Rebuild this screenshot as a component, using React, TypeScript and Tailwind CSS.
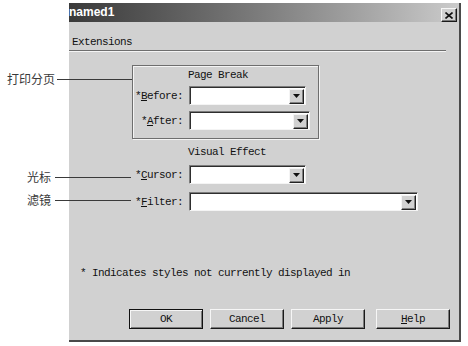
import React from "react";

const mono = { fontFamily: '"Liberation Mono", "DejaVu Sans Mono", monospace' };

// small black down arrow in the combo button
const ComboArrow = () => (
    <svg width="7" height="4" viewBox="0 0 7 4">
        <path d="M0 0h7L3.5 4z" fill="#111" />
    </svg>
);

interface ComboProps {
    width: string;
}

const Combo: React.FC<ComboProps> = ({ width }) => (
    <div
        className={`${width} h-[19px] bg-white flex justify-end items-center border-t border-l border-[#7c7c7c] border-r border-r-[#f4f4f4] border-b border-b-[#f4f4f4] shadow-[inset_1px_1px_0_#2e2e2e]`}
    >
        <div className="w-[15px] h-[15px] mr-[1px] mt-[1px] bg-[#d1d1d1] flex items-center justify-center border-t border-l border-[#f4f4f4] border-r border-r-[#222] border-b border-b-[#222] shadow-[inset_-1px_-1px_0_#808080]">
            <ComboArrow />
        </div>
    </div>
);

interface FieldProps {
    label: React.ReactNode;
    labelWidth: string;
    width: string;
    className?: string;
}

const Field: React.FC<FieldProps> = ({ label, labelWidth, width, className }) => (
    <div className={`flex items-center ${className ?? ""}`}>
        <div className={`${labelWidth} text-right text-[11px] tracking-[-0.6px] leading-[12px] pr-[6px] text-[#111]`}>{label}</div>
        <Combo width={width} />
    </div>
);

const DlgButton: React.FC<{ children: React.ReactNode; def?: boolean; className?: string }> = ({ children, def, className }) => (
    <div
        className={`w-[74px] h-[20px] bg-[#d1d1d1] flex items-center justify-center text-[11px] tracking-[-0.6px] leading-[12px] text-[#111] ${
            def
                ? "border border-[#111] shadow-[inset_1px_1px_0_#f6f6f6,inset_-1px_-1px_0_#7a7a7a]"
                : "border-t border-l border-[#f6f6f6] border-r border-r-[#1a1a1a] border-b border-b-[#1a1a1a] shadow-[inset_-1px_-1px_0_#7a7a7a]"
        } ${className ?? ""}`}
    >
        {children}
    </div>
);

const Callout: React.FC<{ text: string; top: string; left: string }> = ({ text, top, left }) => (
    <div
        className={`absolute ${top} ${left} text-[12px] leading-[14px] text-[#3a3a3a]`}
        style={{ fontFamily: '"Noto Sans CJK SC", "Noto Sans", sans-serif' }}
    >
        {text}
    </div>
);

export default function App() {
    return (
        <div className="relative w-[468px] h-[346px] bg-white overflow-hidden" style={mono}>
            {/* dialog */}
            <div className="ml-[69px] mt-[3px] w-[392px] h-[339px] bg-[#d1d1d1] border-r-2 border-b-2 border-[#4a4a4a] flex flex-col">
                {/* title bar */}
                <div className="h-[19px] flex items-start justify-between bg-gradient-to-r from-[#3a3a3a] via-[#7e7e7e] to-[#cbcbcb] pr-[2px]">
                    <span
                        className="text-white font-bold text-[12px] leading-[19px]"
                        style={{ fontFamily: '"Liberation Sans", Arial, sans-serif' }}
                    >
                        named1
                    </span>
                    <div className="w-[16px] h-[14px] mt-[5px] bg-[#d1d1d1] flex items-center justify-center border-t border-l border-[#f6f6f6] border-r border-r-[#1a1a1a] border-b border-b-[#1a1a1a] shadow-[inset_-1px_-1px_0_#7a7a7a]">
                        <svg width="8" height="7" viewBox="0 0 8 7">
                            <path d="M0.5 0.5L7.5 6.5M7.5 0.5L0.5 6.5" stroke="#111" strokeWidth="1.6" />
                        </svg>
                    </div>
                </div>

                {/* tab label */}
                <div className="mt-[14px] pl-[3px] text-[11px] tracking-[-0.6px] leading-[12px] text-[#111]">Extensions</div>
                <div className="mt-[2px] mr-[13px] h-[2px] border-t border-[#6e6e6e] border-b border-b-[#f4f4f4]" />

                {/* page break group */}
                <div className="mt-[13px] ml-[63px] w-[187px] h-[74px] border border-[#6e6e6e] shadow-[inset_1px_1px_0_#f4f4f4,1px_1px_0_#f4f4f4] flex flex-col">
                    <div className="mt-[3px] pl-[55px] text-[11px] tracking-[-0.6px] leading-[12px] text-[#111]">Page Break</div>
                    <Field
                        className="mt-[5px]"
                        labelWidth="w-[56px]"
                        width="w-[117px]"
                        label={<>*<span className="underline">B</span>efore:</>}
                    />
                    <Field
                        className="mt-[6px]"
                        labelWidth="w-[56px]"
                        width="w-[121px]"
                        label={<>*<span className="underline">A</span>fter:</>}
                    />
                </div>

                {/* visual effect */}
                <div className="mt-[7px] pl-[119px] text-[11px] tracking-[-0.6px] leading-[12px] text-[#111]">Visual Effect</div>
                <Field
                    className="mt-[7px] ml-[63px]"
                    labelWidth="w-[57px]"
                    width="w-[117px]"
                    label={<>*<span className="underline">C</span>ursor:</>}
                />
                <Field
                    className="mt-[8px] ml-[63px]"
                    labelWidth="w-[57px]"
                    width="w-[229px]"
                    label={<>*<span className="underline">F</span>ilter:</>}
                />

                <div className="mt-[56px] pl-[11px] text-[11px] tracking-[-0.6px] leading-[12px] text-[#111]">
                    * Indicates styles not currently displayed in
                </div>

                {/* buttons */}
                <div className="mt-[30px] ml-[60px] flex">
                    <DlgButton def>OK</DlgButton>
                    <DlgButton className="ml-[7px]">Cancel</DlgButton>
                    <DlgButton className="ml-[7px]">Apply</DlgButton>
                    <DlgButton className="ml-[11px]">
                        <span className="underline">H</span>elp
                    </DlgButton>
                </div>
            </div>

            {/* callouts */}
            <Callout text="打印分页" top="top-[72px]" left="left-[7px]" />
            <div className="absolute top-[79px] left-[57px] w-[75px] h-px bg-[#3a3a3a]" />
            <Callout text="光标" top="top-[170px]" left="left-[27px]" />
            <div className="absolute top-[177px] left-[55px] w-[76px] h-px bg-[#3a3a3a]" />
            <Callout text="滤镜" top="top-[193px]" left="left-[27px]" />
            <div className="absolute top-[200px] left-[55px] w-[76px] h-px bg-[#3a3a3a]" />
        </div>
    );
}
